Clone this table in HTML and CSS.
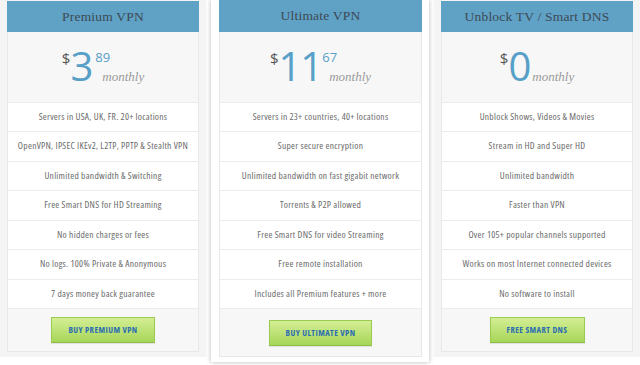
FILE: index.html
```html
<!DOCTYPE html>
<html lang="en">
<head>
<meta charset="utf-8">
<title>VPN Pricing</title>
<link rel="stylesheet" href="styles.css">
</head>
<body>
<div class="pricing">
  <div class="plan">
    <div class="card">
      <div class="plan-head">Premium VPN</div>
      <div class="price">
        <span class="cur">$</span><span class="amt">3</span><span class="tail"><span class="cents">89</span><span class="per">monthly</span></span>
      </div>
      <ul class="feats">
        <li>Servers in USA, UK, FR. 20+ locations</li>
        <li>OpenVPN, IPSEC IKEv2, L2TP, PPTP &amp; Stealth VPN</li>
        <li>Unlimited bandwidth &amp; Switching</li>
        <li>Free Smart DNS for HD Streaming</li>
        <li>No hidden charges or fees</li>
        <li>No logs. 100% Private &amp; Anonymous</li>
        <li>7 days money back guarantee</li>
      </ul>
      <div class="foot"><a class="btn" href="#">BUY PREMIUM VPN</a></div>
    </div>
  </div>
  <div class="plan plan--featured">
    <div class="card">
      <div class="plan-head">Ultimate VPN</div>
      <div class="price">
        <span class="cur">$</span><span class="amt amt--ones">11</span><span class="tail tail--wide"><span class="cents">67</span><span class="per">monthly</span></span>
      </div>
      <ul class="feats">
        <li>Servers in 23+ countries, 40+ locations</li>
        <li>Super secure encryption</li>
        <li>Unlimited bandwidth on fast gigabit network</li>
        <li>Torrents &amp; P2P allowed</li>
        <li>Free Smart DNS for video Streaming</li>
        <li>Free remote installation</li>
        <li>Includes all Premium features + more</li>
      </ul>
      <div class="foot"><a class="btn" href="#">BUY ULTIMATE VPN</a></div>
    </div>
  </div>
  <div class="plan">
    <div class="card">
      <div class="plan-head">Unblock TV / Smart DNS</div>
      <div class="price">
        <span class="cur">$</span><span class="amt">0</span><span class="tail tail--solo"><span class="per">monthly</span></span>
      </div>
      <ul class="feats">
        <li>Unblock Shows, Videos &amp; Movies</li>
        <li>Stream in HD and Super HD</li>
        <li>Unlimited bandwidth</li>
        <li>Faster than VPN</li>
        <li>Over 105+ popular channels supported</li>
        <li>Works on most Internet connected devices</li>
        <li>No software to install</li>
      </ul>
      <div class="foot"><a class="btn" href="#">FREE SMART DNS</a></div>
    </div>
  </div>
</div>
</body>
</html>
```
FILE: styles.css
```css
* { box-sizing: border-box; }
html, body { margin: 0; padding: 0; background: #fff; }
body { width: 640px; height: 365px; overflow: hidden; }

.pricing {
  display: flex;
  align-items: flex-start;
  gap: 5px;
}

.plan {
  width: 206px;
  padding: 1px 7px 5px;
  background: #f4f4f4;
}
.plan--featured {
  width: 218px;
  padding: 0 7px 5px 8px;
  background: #fff;
  box-shadow: 0 0 5px rgba(0, 0, 0, 0.28);
}

.card {
  border: 1px solid #e8e8e8;
  border-top: 0;
}

.plan-head {
  margin: 0 -1px;
  height: 31px;
  line-height: 31px;
  text-align: center;
  background: #60a1c6;
  color: #3d4a53;
  font-family: "Liberation Serif", serif;
  font-size: 13.5px;
  letter-spacing: 0.2px;
}
.plan--featured .plan-head { height: 32px; line-height: 32px; }

.price {
  height: 71px;
  padding-top: 14px;
  background: #f7f7f7;
  border-bottom: 1px solid #ececec;
  display: flex;
  justify-content: center;
  align-items: flex-start;
  font-family: "Open Sans", sans-serif;
}
.cur {
  margin-top: 5px;
  font-size: 15px;
  line-height: 15px;
  color: #555;
}
.amt {
  font-size: 40px;
  line-height: 40px;
  color: #58a0c8;
}
.amt--ones { letter-spacing: -1px; }
.tail {
  margin-top: 4.75px;
  margin-left: 2px;
  height: 32.5px;
  display: flex;
  flex-direction: column;
  justify-content: space-between;
  align-items: flex-start;
}
.tail--wide { margin-left: 0; }
.tail--solo { justify-content: flex-end; margin-left: 1px; }
.cents {
  font-size: 13px;
  line-height: 13px;
  color: #58a0c8;
}
.per {
  margin-left: 7px;
  font-family: "Liberation Serif", serif;
  font-style: italic;
  font-size: 13px;
  line-height: 13px;
  color: #9a9a9a;
}
.tail--solo .per { margin-left: 0; }

.feats {
  list-style: none;
  margin: 0;
  padding: 0;
}
.feats li {
  height: 29.43px;
  line-height: 28.43px;
  border-bottom: 1px solid #ececec;
  background: #fff;
  text-align: center;
  white-space: nowrap;
  font-family: "Open Sans", sans-serif;
  font-stretch: 75%;
  font-size: 9.5px;
  letter-spacing: 0.27px;
  color: #6a6a6a;
}

.foot {
  height: 42px;
  padding-top: 8px;
  background: #f7f7f7;
  text-align: center;
}
.plan--featured .foot { height: 47px; padding-top: 11px; }

.btn {
  display: inline-block;
  height: 26px;
  line-height: 24px;
  padding: 0 16px;
  border: 1px solid #9ccb52;
  border-bottom-color: #8cbf43;
  background: linear-gradient(#d4ee95, #a6d658);
  color: #2b6cb2;
  text-decoration: none;
  font-family: "Open Sans", sans-serif;
  font-stretch: 75%;
  font-weight: bold;
  font-size: 8.5px;
  letter-spacing: 0.45px;
  box-shadow: 0 1px 1px rgba(0, 0, 0, 0.08);
}
```
